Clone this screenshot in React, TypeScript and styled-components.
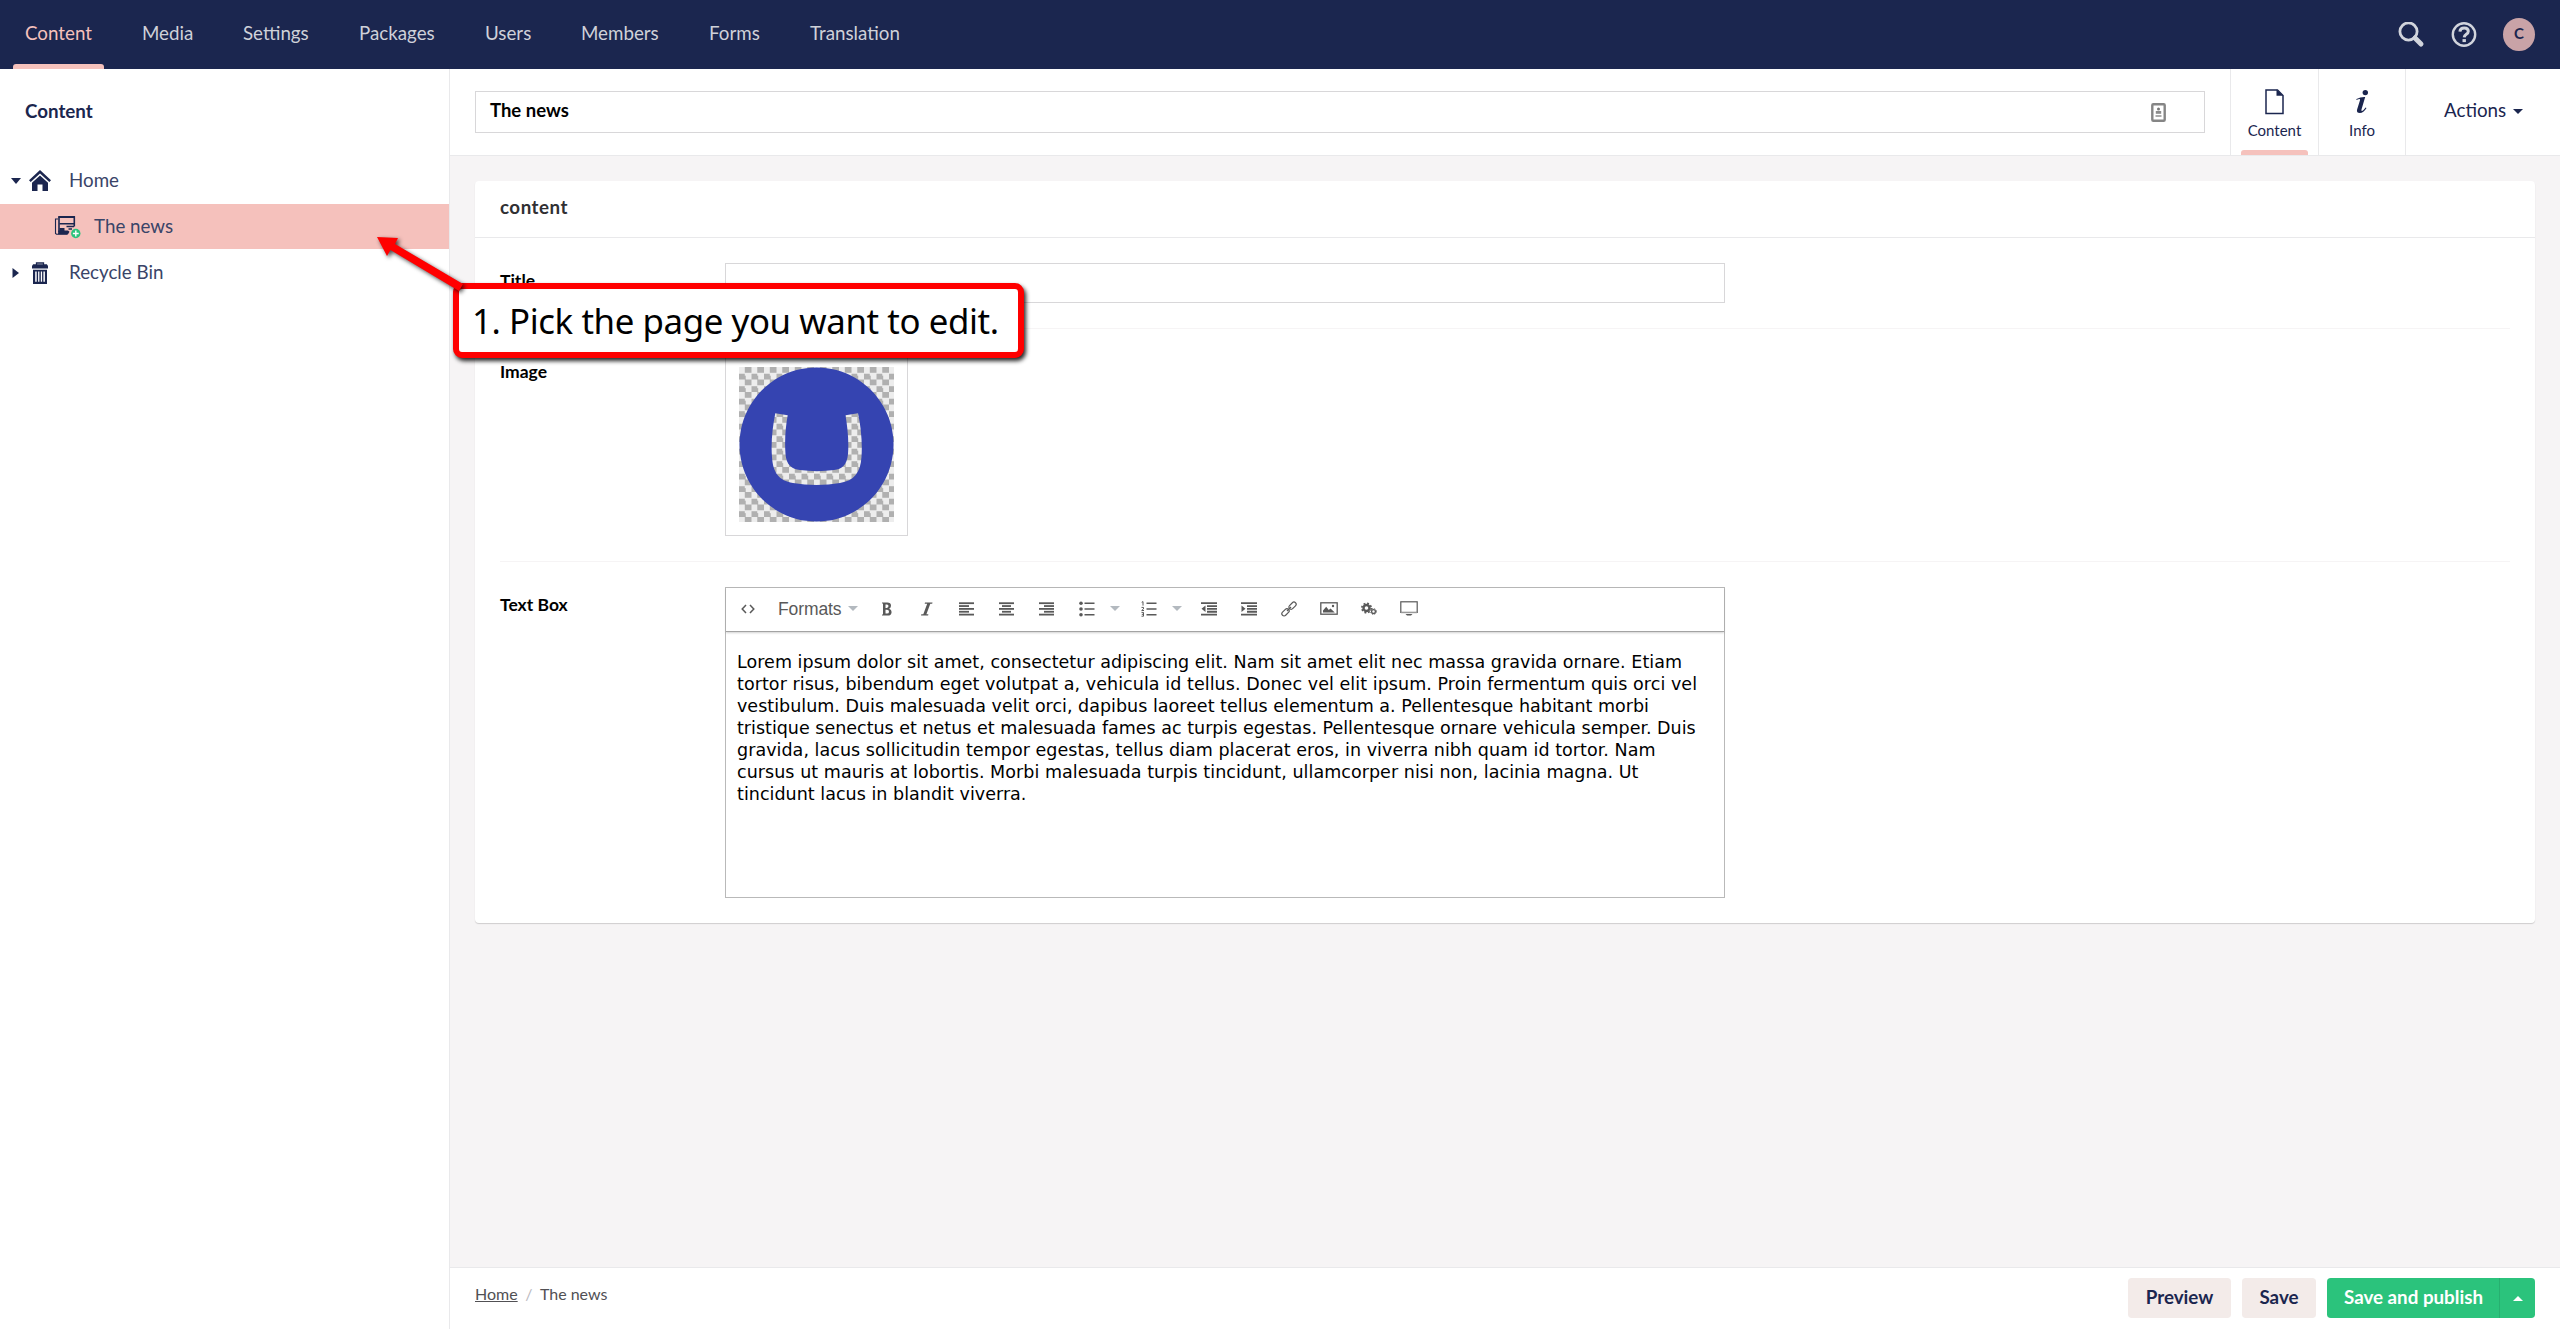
import React from "react";
import styled, { createGlobalStyle } from "styled-components";

const navy = "#1b264f";
const blush = "#f5c1bc";
const line = "#e9e9eb";
const toolGrey = "#595959";

const GlobalStyle = createGlobalStyle`
  *, *::before, *::after { box-sizing: border-box; }
  html, body { margin: 0; padding: 0; }
  body {
    font-family: Lato, "Open Sans", sans-serif;
    font-size: 18.75px;
    line-height: 24px;
    color: ${navy};
    background: #fff;
    overflow: hidden;
  }
  svg { display: block; flex: none; }
`;

const Shell = styled.div`
  position: relative;
  width: 2560px;
  height: 1329px;
  display: flex;
  flex-direction: column;
`;

/* ---------- top bar ---------- */
const TopBar = styled.header`
  height: 69px;
  flex: none;
  display: flex;
  justify-content: space-between;
  background: ${navy};
`;

const Nav = styled.nav`
  display: flex;
`;

const NavItem = styled.a<{ $active?: boolean; $width: number }>`
  position: relative;
  width: ${(p) => p.$width}px;
  padding: 21px 0 0 25px;
  white-space: nowrap;
  color: ${(p) => (p.$active ? blush : "#cfd1d9")};
  &::after {
    content: "";
    display: ${(p) => (p.$active ? "block" : "none")};
    position: absolute;
    left: 13px;
    right: 13px;
    bottom: 0;
    height: 5px;
    border-radius: 3px 3px 0 0;
    background: ${blush};
  }
`;

const TopTools = styled.div`
  display: flex;
  align-items: center;
  padding-right: 25px;
  gap: 26px;
`;

const Avatar = styled.div`
  width: 32px;
  height: 33px;
  border-radius: 50%;
  background: #c9a3a7;
  font-size: 15px;
  font-weight: 700;
  line-height: 31px;
  text-align: center;
`;

/* ---------- body ---------- */
const Body = styled.div`
  flex: 1;
  display: flex;
  min-height: 0;
`;

const Sidebar = styled.aside`
  width: 450px;
  flex: none;
  border-right: 1px solid ${line};
  background: #fff;
`;

const SidebarTitle = styled.h5`
  margin: 0;
  padding: 30px 0 0 25px;
  height: 89px;
  font-size: 18.75px;
  font-weight: 700;
  line-height: 24px;
`;

const Tree = styled.div`
  display: flex;
  flex-direction: column;
  gap: 1px;
`;

const TreeRow = styled.div<{ $level: number; $active?: boolean }>`
  height: 45px;
  display: flex;
  align-items: center;
  padding-left: ${(p) => 11 + p.$level * 25}px;
  background: ${(p) => (p.$active ? blush : "transparent")};
`;

const TreeCaret = styled.span`
  width: 18px;
  flex: none;
`;

const TreeIcon = styled.span`
  width: 40px;
  flex: none;
`;

const TreeLabel = styled.span`
  color: #3a4468;
  padding-bottom: 1px;
`;

const Main = styled.main`
  flex: 1;
  display: flex;
  flex-direction: column;
  min-width: 0;
`;

const EditorHeader = styled.div`
  height: 87px;
  flex: none;
  display: flex;
  background: #fff;
  border-bottom: 1px solid ${line};
`;

const NameField = styled.div`
  width: 1730px;
  height: 42px;
  margin: 22px 25px 0;
  padding: 0 38px 0 14px;
  display: flex;
  align-items: center;
  justify-content: space-between;
  border: 1px solid #d8d7d9;
  color: #000;
  font-weight: 700;
  font-size: 18.5px;
`;

const NameText = styled.span`
  padding-bottom: 4px;
`;

const SubTab = styled.div<{ $active?: boolean; $width: number }>`
  position: relative;
  width: ${(p) => p.$width}px;
  border-left: 1px solid ${line};
  display: flex;
  flex-direction: column;
  align-items: center;
  padding-top: 19px;
  font-size: 15px;
  line-height: 20px;
  svg { margin-bottom: 5px; }
  &::after {
    content: "";
    display: ${(p) => (p.$active ? "block" : "none")};
    position: absolute;
    left: 10px;
    right: 10px;
    bottom: 0;
    height: 5px;
    border-radius: 3px 3px 0 0;
    background: ${blush};
  }
`;

const Actions = styled.div`
  flex: 1;
  border-left: 1px solid ${line};
  display: flex;
  align-items: center;
  padding: 0 0 2px 38px;
  gap: 7px;
`;

const ActionsText = styled.span`
  padding-bottom: 2px;
`;

const Canvas = styled.div`
  flex: 1;
  padding: 25px;
  background: #f6f4f5;
`;

const Card = styled.section`
  height: 742px;
  border-radius: 4px;
  background: #fff;
  box-shadow: 0 1px 1px rgba(0, 0, 0, 0.16);
`;

const CardTitle = styled.div`
  height: 57px;
  padding: 14px 25px 0;
  border-bottom: 1px solid ${line};
  color: #303033;
  font-weight: 700;
  letter-spacing: 0.5px;
`;

const Property = styled.div<{ $height: number; $last?: boolean }>`
  height: ${(p) => p.$height}px;
  margin: 0 25px;
  padding-top: 25px;
  display: flex;
  border-bottom: ${(p) => (p.$last ? "0" : "1px solid #f6f4f5")};
`;

const Label = styled.div`
  width: 225px;
  padding-top: 6px;
  flex: none;
  color: #000;
  font-size: 17.5px;
  font-weight: 700;
`;

const TextInput = styled.div`
  width: 1000px;
  height: 40px;
  border: 1px solid #d8d7d9;
`;

const Thumb = styled.div`
  width: 183px;
  height: 183px;
  margin-top: -1px;
  padding: 13px;
  border: 1px solid #d8d7d9;
`;

const Checker = styled.div`
  width: 155px;
  height: 155px;
  background: repeating-conic-gradient(#b0b0b0 0 25%, #ededed 0 50%) 0 0 / 12.5px 12.5px;
`;

/* ---------- rich text editor ---------- */
const Rte = styled.div`
  width: 1000px;
  height: 311px;
  border: 1px solid #b9b9b9;
`;

const Toolbar = styled.div`
  height: 44px;
  display: flex;
  align-items: center;
  padding: 0 0 2px 15px;
  border-bottom: 1px solid #a3a3a3;
  box-shadow: 0 1px 2px rgba(0, 0, 0, 0.18);
`;

const Tool = styled.span<{ $width: number }>`
  width: ${(p) => p.$width}px;
  flex: none;
`;

const Formats = styled.span`
  width: 70px;
  flex: none;
  font: 17.5px/22px "Liberation Sans", Arial, sans-serif;
  letter-spacing: -0.1px;
  color: ${toolGrey};
`;

const Copy = styled.p`
  margin: 19px 0 0 11px;
  font: 17.5px/22px "DejaVu Sans", Verdana, sans-serif;
  color: #000;
`;

const CopyLine = styled.span<{ $tracking: number }>`
  display: block;
  white-space: nowrap;
  letter-spacing: ${(p) => p.$tracking}px;
`;

/* ---------- footer ---------- */
const Footer = styled.footer`
  height: 62px;
  flex: none;
  display: flex;
  justify-content: space-between;
  padding: 10px 25px 0;
  background: #fff;
  border-top: 1px solid ${line};
`;

const Crumbs = styled.div`
  display: flex;
  gap: 7.5px;
  padding-top: 4px;
  font-size: 16px;
  line-height: 24px;
  color: #515054;
`;

const CrumbLink = styled.a`
  text-decoration: underline;
`;

const CrumbSlash = styled.span`
  color: #bbbabf;
`;

const Buttons = styled.div`
  display: flex;
  gap: 11px;
`;

const Button = styled.div<{ $width: number }>`
  width: ${(p) => p.$width}px;
  height: 40px;
  border-radius: 3.75px;
  background: #f3ebe9;
  font-weight: 700;
  line-height: 38px;
  text-align: center;
  white-space: nowrap;
`;

const SplitButton = styled.div`
  display: flex;
  height: 40px;
  border-radius: 3.75px;
  background: #2bc37c;
  color: #fff;
  font-weight: 700;
  line-height: 38px;
`;

const SplitLabel = styled.span`
  width: 172px;
  padding-left: 1px;
  text-align: center;
  white-space: nowrap;
`;

const SplitToggle = styled.span`
  width: 36px;
  border-left: 1px solid #27b070;
  display: flex;
  align-items: center;
  justify-content: center;
`;

/* ---------- annotation over the page ---------- */
const Note = styled.div`
  position: absolute;
  left: 453px;
  top: 283px;
  width: 571px;
  height: 75px;
  padding-left: 13px;
  border: 6px solid #f00;
  border-radius: 9px;
  background: #fff;
  box-shadow: 2px 3px 4px rgba(0, 0, 0, 0.85);
  color: #000;
  font: 34.8px/64px "Noto Sans", "Open Sans", sans-serif;
  letter-spacing: -0.4px;
  white-space: nowrap;
`;

const NoteArrow = styled.svg`
  position: absolute;
  left: 365px;
  top: 225px;
  overflow: visible;
  filter: drop-shadow(2px 2px 2px rgba(0, 0, 0, 0.7));
`;

const Down = ({ color = navy, w = 10, h = 5 }: { color?: string; w?: number; h?: number }) => (
  <svg width={w} height={h} viewBox="0 0 10 5" preserveAspectRatio="none">
    <path d="M0 0h10L5 5z" fill={color} />
  </svg>
);

const Bars = ({ rows }: { rows: [number, number][] }) => (
  <svg width="16" height="14" viewBox="0 0 16 14">
    {rows.map(([x, w], i) => (
      <rect key={i} x={x} y={i * 2.85 + 0.3} width={w} height="1.8" fill={toolGrey} />
    ))}
  </svg>
);

const nav: [string, number][] = [
  ["Content", 117],
  ["Media", 101],
  ["Settings", 116],
  ["Packages", 126],
  ["Users", 96],
  ["Members", 128],
  ["Forms", 101],
  ["Translation", 140],
];

const copy: [string, number][] = [
  ["Lorem ipsum dolor sit amet, consectetur adipiscing elit. Nam sit amet elit nec massa gravida ornare. Etiam", 0.045],
  ["tortor risus, bibendum eget volutpat a, vehicula id tellus. Donec vel elit ipsum. Proin fermentum quis orci vel", 0.06],
  ["vestibulum. Duis malesuada velit orci, dapibus laoreet tellus elementum a. Pellentesque habitant morbi", 0.015],
  ["tristique senectus et netus et malesuada fames ac turpis egestas. Pellentesque ornare vehicula semper. Duis", 0],
  ["gravida, lacus sollicitudin tempor egestas, tellus diam placerat eros, in viverra nibh quam id tortor. Nam", 0.045],
  ["cursus ut mauris at lobortis. Morbi malesuada turpis tincidunt, ullamcorper nisi non, lacinia magna. Ut", 0.05],
  ["tincidunt lacus in blandit viverra.", 0.03],
];

const RteToolbar = () => (
  <Toolbar>
    <Tool $width={37}>
      <svg width="14" height="10" viewBox="0 0 14 10" fill="none" stroke={toolGrey} strokeWidth="1.5">
        <path d="M5 1L1.200 5L5 9M9 1l3.800 4L9 9" />
      </svg>
    </Tool>
    <Formats>Formats</Formats>
    <Tool $width={34}><Down color="#b3b9bf" /></Tool>
    <Tool $width={39}>
      <svg width="10" height="14" viewBox="0 0 10 14">
        <path fillRule="evenodd" fill={toolGrey} d="M0 .5h5.200Q9 .5 9 3.800Q9 6 7.200 6.700Q9.600 7.400 9.600 9.900Q9.600 13.500 5.500 13.500H0V12.500h1V1.500H0zM3.500 2.400v3.500h1.300q1.700 0 1.700-1.800T4.800 2.400zM3.500 7.800v3.800h1.500q2 0 2-1.900T5 7.800z" />
      </svg>
    </Tool>
    <Tool $width={38}>
      <svg width="12" height="14" viewBox="0 0 12 14">
        <path d="M4 .5h7.500l-.3 1.200H9.300L5.400 12.300h2l-.3 1.200H0l.3-1.200h2L6.200 1.700H3.700z" fill={toolGrey} />
      </svg>
    </Tool>
    <Tool $width={40}><Bars rows={[[0, 15], [0, 10], [0, 15], [0, 10], [0, 15]]} /></Tool>
    <Tool $width={40}><Bars rows={[[0, 15], [3, 9], [0, 15], [3, 9], [0, 15]]} /></Tool>
    <Tool $width={40}><Bars rows={[[0, 15], [5, 10], [0, 15], [5, 10], [0, 15]]} /></Tool>
    <Tool $width={31}>
      <svg width="16" height="16" viewBox="0 0 16 16" fill={toolGrey}>
        <circle cx="2" cy="2.200" r="1.800" /><circle cx="2" cy="8" r="1.800" /><circle cx="2" cy="13.700" r="1.800" />
        <path d="M5.500 1.500H15.500v1.600H5.500zM5.500 7.200H15.500v1.600H5.500zM5.500 12.900H15.500v1.600H5.500z" />
      </svg>
    </Tool>
    <Tool $width={31}><Down color="#b3b9bf" /></Tool>
    <Tool $width={31}>
      <svg width="16" height="16" viewBox="0 0 16 16" fill={toolGrey}>
        <path d="M5.500 1.500H15.500v1.600H5.500zM5.500 7.200H15.500v1.600H5.500zM5.500 12.900H15.500v1.600H5.500z" />
        <path d="M.7 1.300L2 .6V4.600M.5 6.400h2v1.500L.7 9.500H3M.5 11.400h2v3.800H.5M.8 13.300h1.700" fill="none" stroke={toolGrey} strokeWidth="1" />
      </svg>
    </Tool>
    <Tool $width={29}><Down color="#b3b9bf" /></Tool>
    <Tool $width={40}>
      <svg width="16" height="14" viewBox="0 0 16 14" fill={toolGrey}>
        <path d="M0 .3h16v1.800H0zM6 3.150h10v1.800H6zM6 6h10v1.800H6zM6 8.850h10v1.800H6zM0 11.700h16v1.800H0zM.5 6.800L4.500 3.500v6.600z" />
      </svg>
    </Tool>
    <Tool $width={40}>
      <svg width="16" height="14" viewBox="0 0 16 14" fill={toolGrey}>
        <path d="M0 .3h16v1.800H0zM6 3.150h10v1.800H6zM6 6h10v1.800H6zM6 8.850h10v1.800H6zM0 11.700h16v1.800H0zM4.500 6.800L.5 3.500v6.600z" />
      </svg>
    </Tool>
    <Tool $width={39}>
      <svg width="16" height="16" viewBox="0 0 16 16" fill="none" stroke={toolGrey} strokeWidth="1.200">
        <rect x="7.300" y="2.500" width="8.400" height="4.400" rx="2.200" transform="rotate(-45 11.500 4.700)" />
        <rect x=".3" y="9.100" width="8.400" height="4.400" rx="2.200" transform="rotate(-45 4.500 11.300)" />
        <path d="M6 10l4-4" />
      </svg>
    </Tool>
    <Tool $width={41}>
      <svg width="18" height="13" viewBox="0 0 18 13">
        <rect x=".8" y=".8" width="16.400" height="11.400" fill="none" stroke={toolGrey} strokeWidth="1.300" />
        <path d="M3 10.500V8.500l3.200-3.700 2.600 3.200 1.700-1.600 4.300 4.100z" fill={toolGrey} />
        <circle cx="13" cy="4" r="1.200" fill={toolGrey} />
      </svg>
    </Tool>
    <Tool $width={39}>
      <svg width="17" height="14" viewBox="0 0 17 14" fill="none" stroke={toolGrey}>
        <circle cx="5.500" cy="6" r="3" strokeWidth="2.400" />
        <circle cx="5.500" cy="6" r="4.700" strokeWidth="1.600" strokeDasharray="1.900 1.800" />
        <circle cx="12.500" cy="9.500" r="1.900" strokeWidth="1.300" />
        <circle cx="12.500" cy="9.500" r="2.900" strokeWidth="1" strokeDasharray="1.200 1.150" />
      </svg>
    </Tool>
    <Tool $width={20}>
      <svg width="18" height="15" viewBox="0 0 18 15">
        <rect x=".8" y=".8" width="16.400" height="10.600" fill="none" stroke={toolGrey} strokeWidth="1.200" />
        <path d="M1 11h16v1.200H1z" fill="#999" />
        <path d="M5.500 13h7l-1.500 1.500H7z" fill={toolGrey} />
      </svg>
    </Tool>
  </Toolbar>
);

export default function App() {
  return (
    <Shell>
      <GlobalStyle />
      <TopBar>
        <Nav>
          {nav.map(([name, width], i) => (
            <NavItem key={name} $width={width} $active={i === 0}>{name}</NavItem>
          ))}
        </Nav>
        <TopTools>
          <svg width="27" height="26" viewBox="0 0 27 26" fill="none" stroke="#d1d4dc">
            <circle cx="10.500" cy="9.500" r="8.600" strokeWidth="2.800" />
            <path d="M17 16l6 6" strokeWidth="5" strokeLinecap="round" />
          </svg>
          <svg width="26" height="26" viewBox="0 0 26 26" fill="none" stroke="#d1d4dc">
            <circle cx="13" cy="12.500" r="11.200" strokeWidth="2.400" />
            <path d="M8.900 9.600q.3-3.600 4.300-3.600q4.100 0 4.100 3.300q0 1.700-2 3t-2.100 3" strokeWidth="3" />
            <path d="M11.500 17.100h3.400v3h-3.400z" fill="#d1d4dc" stroke="none" />
          </svg>
          <Avatar>C</Avatar>
        </TopTools>
      </TopBar>

      <Body>
        <Sidebar>
          <SidebarTitle>Content</SidebarTitle>
          <Tree>
            <TreeRow $level={0}>
              <TreeCaret><Down w={10} h={6} /></TreeCaret>
              <TreeIcon>
                <svg width="22" height="21" viewBox="0 0 22 21" fill={navy}>
                  <path d="M11 0L22 10.300 20.300 12 11 3.500 1.700 12 0 10.300z" />
                  <path d="M11 5.500l8 7.300V21h-5.500v-6.500h-5V21H3v-8.200z" />
                </svg>
              </TreeIcon>
              <TreeLabel>Home</TreeLabel>
            </TreeRow>
            <TreeRow $level={1} $active>
              <TreeCaret />
              <TreeIcon>
                <svg width="28" height="24" viewBox="0 0 28 24">
                  <g fill="none" stroke={navy} strokeWidth="1.100">
                    <path d="M4 4H1.500v14.500l1 .8h11" />
                    <path d="M5 17V2h15.300v9.500" strokeWidth="1.600" />
                    <path d="M5.500 8.700h14.800M12.500 11.400h7.500M14.500 14h3.500" strokeWidth="1.500" />
                  </g>
                  <path d="M4.500 1h16.400v1.900H4.500zM4.300 15.500h9.700l1.500 1.200-1.500 2.500H4zM5.500 13h5v3h-5z" fill={navy} />
                  <circle cx="21.800" cy="18.500" r="4.700" fill="#2bc37c" />
                  <path d="M21.800 15.600v5.800M18.900 18.500h5.800" stroke="#fff" strokeWidth="1.400" />
                </svg>
              </TreeIcon>
              <TreeLabel>The news</TreeLabel>
            </TreeRow>
            <TreeRow $level={0}>
              <TreeCaret>
                <svg width="8" height="10" viewBox="0 0 8 10"><path d="M1.500 0L8 5l-6.500 5z" fill={navy} /></svg>
              </TreeCaret>
              <TreeIcon>
                <svg width="22" height="22" viewBox="0 0 22 22">
                  <path d="M7.500 3V1h7V3" fill="none" stroke={navy} strokeWidth="1.300" />
                  <path d="M4.200 2.300h13.600l1.200 1.500v2.700H3V3.800z" fill={navy} />
                  <path fillRule="evenodd" d="M4 7.800h14V22H4zM6.200 9.500v10.300h1.500V9.500zM9.100 9.500v10.300h1.300V9.500zM11.800 9.500v10.300h1.300V9.500zM14.400 9.500v10.300h1.500V9.500z" fill={navy} />
                </svg>
              </TreeIcon>
              <TreeLabel>Recycle Bin</TreeLabel>
            </TreeRow>
          </Tree>
        </Sidebar>

        <Main>
          <EditorHeader>
            <NameField>
              <NameText>The news</NameText>
              <svg width="15" height="19" viewBox="0 0 15 19">
                <rect x="1.300" y="1.300" width="12.400" height="16.400" rx="1" fill="#fff" stroke="#858585" strokeWidth="2.400" />
                <circle cx="7.500" cy="6" r="1.500" fill="#777" />
                <path d="M4.800 8h5.400v2.800H4.800z" fill="#8b8b8b" />
                <path d="M4.500 12h6v2h-6z" fill="#aaa" />
              </svg>
            </NameField>
            <SubTab $width={88} $active>
              <svg width="20" height="27" viewBox="1 0 20 27">
                <path d="M2 2h11.500L19 7.500V25.500H2z" fill="none" stroke={navy} strokeWidth="1.500" />
                <path d="M12.500 1.500v6.300h6.500z" fill={navy} />
              </svg>
              Content
            </SubTab>
            <SubTab $width={87}>
              <svg width="14" height="27" viewBox="0 0 14 27" fill={navy}>
                <circle cx="10.300" cy="4.600" r="2.700" />
                <path d="M1.500 11q4-2.200 8.700-2L6.500 21.500q-.4 1.700.6 1.400 1.600-.6 3.500-3.400l.9.600q-3 5-6.600 5-3.700 0-2.800-3.600L5 12.300q.3-1.300-.8-1.200L1.300 12z" />
              </svg>
              Info
            </SubTab>
            <Actions><ActionsText>Actions</ActionsText><Down /></Actions>
          </EditorHeader>

          <Canvas>
            <Card>
              <CardTitle>content</CardTitle>
              <Property $height={91}>
                <Label>Title</Label>
                <TextInput />
              </Property>
              <Property $height={233}>
                <Label>Image</Label>
                <Thumb>
                  <Checker>
                    <svg width="155" height="155" viewBox="0 0 155 155">
                      <path
                        fill="#3544b1"
                        fillRule="evenodd"
                        d="M77.500 .5a77 77 0 1 0 .01 0zM36.300 46.300L48.700 48.200C46.500 60 45.500 74 46.500 87C47.300 98 53 102 61 103C72 104.500 84 104.500 95 103C103 102 108 98 109 87C110 74 108.500 60 106.500 48.200L119 46.300C122 60 123.500 76 122.500 90C121.500 106 115 113.500 101 116C86 118.500 69 118.500 54 116C40 113.500 34 106 33 90C31.800 76 33.500 60 36.300 46.300z"
                      />
                    </svg>
                  </Checker>
                </Thumb>
              </Property>
              <Property $height={360} $last>
                <Label>Text Box</Label>
                <Rte>
                  <RteToolbar />
                  <Copy>
                    {copy.map(([text, tracking]) => (
                      <CopyLine key={text} $tracking={tracking}>{text}</CopyLine>
                    ))}
                  </Copy>
                </Rte>
              </Property>
            </Card>
          </Canvas>

          <Footer>
            <Crumbs>
              <CrumbLink>Home</CrumbLink>
              <CrumbSlash>/</CrumbSlash>
              <span>The news</span>
            </Crumbs>
            <Buttons>
              <Button $width={103}>Preview</Button>
              <Button $width={74}>Save</Button>
              <SplitButton>
                <SplitLabel>Save and publish</SplitLabel>
                <SplitToggle>
                  <svg width="10" height="5" viewBox="0 0 10 5"><path d="M0 5h10L5 0z" fill="#fff" /></svg>
                </SplitToggle>
              </SplitButton>
            </Buttons>
          </Footer>
        </Main>
      </Body>

      <Note>1. Pick the page you want to edit.</Note>
      <NoteArrow width="100" height="66" viewBox="0 0 100 66">
        <path d="M12 12L33 13 30 19 98 59 94 66 25.500 25 22 31z" fill="#f00" />
      </NoteArrow>
    </Shell>
  );
}
